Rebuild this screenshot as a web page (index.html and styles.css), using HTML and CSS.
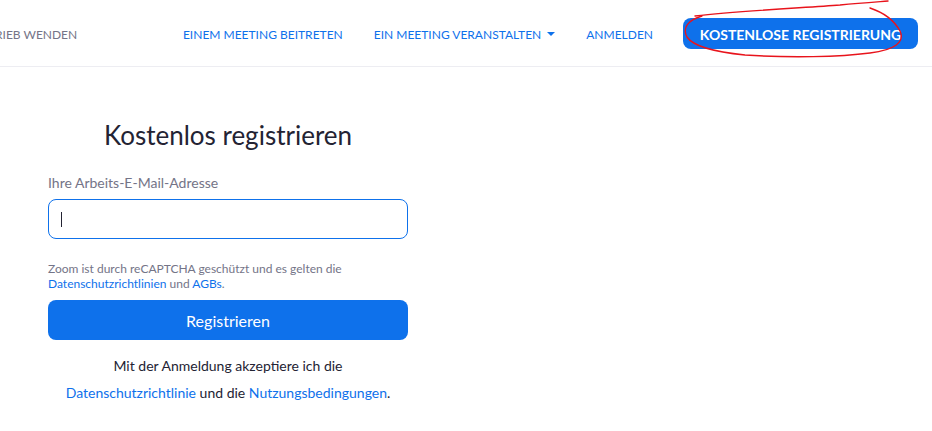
FILE: index.html
```html
<!DOCTYPE html>
<html lang="de">
<head>
<meta charset="utf-8">
<title>Kostenlos registrieren</title>
<link rel="stylesheet" href="styles.css">
</head>
<body>
<header class="header">
  <a class="sales" href="#">RIEB WENDEN</a>
  <nav class="nav">
    <a class="nav-link join" href="#">EINEM MEETING BEITRETEN</a>
    <a class="nav-link host" href="#">EIN MEETING VERANSTALTEN<span class="caret"></span></a>
    <a class="nav-link signin" href="#">ANMELDEN</a>
    <a class="signup-btn" href="#">KOSTENLOSE REGISTRIERUNG</a>
  </nav>
  <svg class="scribble" width="932" height="66" viewBox="0 0 932 66" aria-hidden="true">
    <path d="M695 16 C 740 11, 800 8, 840 5 C 860 3, 875 2, 888 1" fill="none" stroke="#e8141c" stroke-width="1.4" stroke-linecap="round"/>
    <path d="M870 8 C 882 12, 894 20, 900 31 C 905 42, 895 50, 870 53 C 840 57, 790 58, 745 55 C 715 52, 693 46, 687 37 C 682 28, 688 20, 702 16" fill="none" stroke="#e8141c" stroke-width="1.4" stroke-linecap="round"/>
  </svg>
</header>
<main class="main">
  <section class="form">
    <h1 class="title">Kostenlos registrieren</h1>
    <label class="label" for="email">Ihre Arbeits-E-Mail-Adresse</label>
    <div class="input"><span class="cursor"></span></div>
    <p class="captcha">Zoom ist durch reCAPTCHA geschützt und es gelten die<br><a href="#">Datenschutzrichtlinien</a> und <a href="#">AGBs</a>.</p>
    <button class="submit" type="button">Registrieren</button>
    <p class="terms">Mit der Anmeldung akzeptiere ich die</p>
    <p class="terms links"><a href="#">Datenschutzrichtlinie</a> und die <a href="#">Nutzungsbedingungen</a>.</p>
  </section>
</main>
</body>
</html>
```

FILE: styles.css
```css
* { box-sizing: border-box; }
html, body { margin: 0; padding: 0; background: #fff; }
body {
  font-family: Lato, "Open Sans", "Liberation Sans", sans-serif;
  color: #232333;
  width: 932px;
  height: 431px;
  overflow: hidden;
}
a { text-decoration: none; }

.header {
  position: relative;
  height: 67px;
  border-bottom: 1px solid #ededf2;
  display: flex;
  align-items: center;
  padding-right: 14px;
}
.sales {
  white-space: nowrap;
  font-size: 12px;
  color: #747487;
  padding-top: 2px;
  margin-left: -5px;
}
.nav {
  display: flex;
  align-items: center;
  margin-left: auto;
}
.nav-link {
  font-size: 12px;
  color: #0e71eb;
  white-space: nowrap;
  padding-top: 2px;
}
.host { margin-left: 31px; display: flex; align-items: center; }
.signin { margin-left: 31px; }
.caret {
  display: inline-block;
  width: 0; height: 0;
  margin-left: 6px;
  margin-top: -1px;
  border-left: 4px solid transparent;
  border-right: 4px solid transparent;
  border-top: 4px solid #0e71eb;
}
.signup-btn {
  margin-left: 30px;
  width: 235px;
  height: 31px;
  border-radius: 8px;
  background: #0e71eb;
  color: #fff;
  font-weight: 700;
  font-size: 14px;
  display: flex;
  align-items: center;
  justify-content: center;
  white-space: nowrap;
  padding-top: 2px;
}
.scribble {
  position: absolute;
  left: 0; top: 0;
  pointer-events: none;
}

.main { padding-left: 48px; }
.form { width: 360px; display: flex; flex-direction: column; }
.title {
  margin: 52px 0 0;
  font-size: 26px;
  font-weight: 400;
  text-align: center;
  line-height: 32px;
  color: #232333;
}
.label {
  margin-top: 23px;
  font-size: 14px;
  line-height: 18px;
  color: #747487;
}
.input {
  margin-top: 7px;
  height: 40px;
  border: 1px solid #0e71eb;
  border-radius: 8px;
  display: flex;
  align-items: center;
  padding-left: 12px;
}
.cursor { width: 1px; height: 15px; background: #232333; }
.captcha {
  margin: 22px 0 0;
  font-size: 12px;
  line-height: 15px;
  color: #747487;
}
.captcha a { color: #0e71eb; }
.submit {
  margin-top: 9px;
  height: 40px;
  border: 0;
  border-radius: 8px;
  background: #0e71eb;
  color: #fff;
  font-family: inherit;
  font-size: 16px;
  padding: 0;
}
.terms {
  margin: 17px 0 0;
  text-align: center;
  font-size: 14px;
  line-height: 18px;
  color: #232333;
}
.terms.links { margin-top: 9px; }
.terms a { color: #0e71eb; }
```
